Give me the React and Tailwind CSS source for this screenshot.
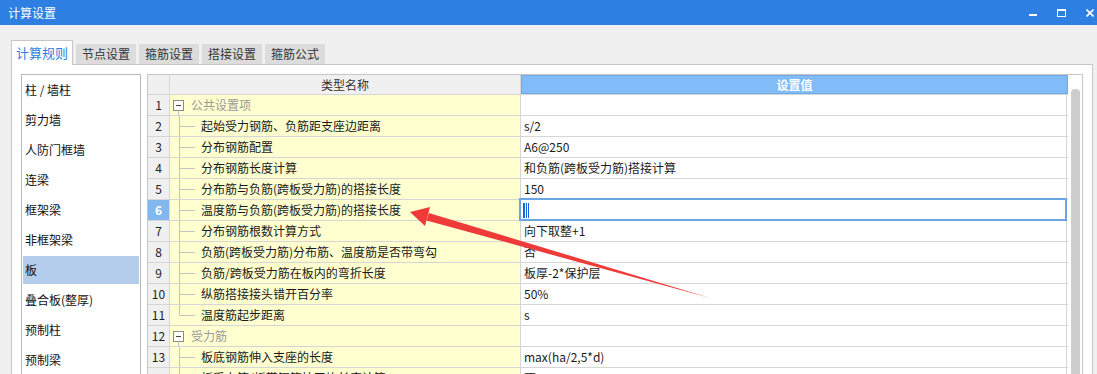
import React from 'react';

const tabs = ['计算规则', '节点设置', '箍筋设置', '搭接设置', '箍筋公式'];

const sideItems = ['柱 / 墙柱', '剪力墙', '人防门框墙', '连梁', '框架梁', '非框架梁', '板', '叠合板(整厚)', '预制柱', '预制梁'];

// type: g = group, c = child, l = last child
const rows = [
  { type: 'g', name: '公共设置项', value: '' },
  { type: 'c', name: '起始受力钢筋、负筋距支座边距离', value: 's/2' },
  { type: 'c', name: '分布钢筋配置', value: 'A6@250' },
  { type: 'c', name: '分布钢筋长度计算', value: '和负筋(跨板受力筋)搭接计算' },
  { type: 'c', name: '分布筋与负筋(跨板受力筋)的搭接长度', value: '150' },
  { type: 'c', name: '温度筋与负筋(跨板受力筋)的搭接长度', value: '', editing: true },
  { type: 'c', name: '分布钢筋根数计算方式', value: '向下取整+1' },
  { type: 'c', name: '负筋(跨板受力筋)分布筋、温度筋是否带弯勾', value: '否' },
  { type: 'c', name: '负筋/跨板受力筋在板内的弯折长度', value: '板厚-2*保护层' },
  { type: 'c', name: '纵筋搭接接头错开百分率', value: '50%' },
  { type: 'l', name: '温度筋起步距离', value: 's' },
  { type: 'g', name: '受力筋', value: '' },
  { type: 'c', name: '板底钢筋伸入支座的长度', value: 'max(ha/2,5*d)' },
  { type: 'c', name: '板受力筋/板带钢筋按平均长度计算', value: '否' },
];

const TreeMark = ({ type }) => {
  if (type === 'g') {
    return (
      <svg width="21" height="20" className="shrink-0">
        <rect x="3.5" y="5.5" width="10" height="10" fill="white" stroke="#8a8a8a" />
        <line x1="6" y1="10.5" x2="11" y2="10.5" stroke="#444" />
        <line x1="8.5" y1="15.5" x2="8.5" y2="20" stroke="#c4c4c4" />
      </svg>
    );
  }
  return (
    <svg width="31" height="20" className="shrink-0">
      <line x1="9.5" y1="0" x2="9.5" y2={type === 'l' ? 10.5 : 20} stroke="#c4c4c4" />
      <line x1="9.5" y1="10.5" x2="25" y2="10.5" stroke="#c4c4c4" />
    </svg>
  );
};

const Row = ({ row, index }) => (
  <div className="flex h-[21px] border-b border-[#d6d6d6]">
    <div
      className={`w-[22px] shrink-0 border-r border-[#d6d6d6] flex items-center justify-center text-[12px] ${
        row.editing ? 'bg-[#82b8ee] text-white font-bold' : 'bg-[#f0f0f0] text-[#222]'
      }`}
    >
      {index + 1}
    </div>
    <div className="w-[351px] shrink-0 border-r border-[#d6d6d6] bg-[#ffffcf] flex items-center">
      <TreeMark type={row.type} />
      <span className={`text-[12px] whitespace-nowrap ${row.type === 'g' ? 'text-[#9a9a9a]' : 'text-[#1a1a1a]'}`}>
        {row.name}
      </span>
    </div>
    <div className="relative w-[546px] shrink-0 border-r border-[#d6d6d6] bg-white flex items-center pl-[3px] text-[12px] text-[#1a1a1a] whitespace-nowrap">
      {row.editing ? (
        <>
          <div className="absolute -top-[2px] -left-[2px] -right-[1px] -bottom-[1px] border-2 border-[#6aa6e4]" />
          <div className="flex gap-[1px] h-[15px] w-[6px] bg-[#1466d4] px-[1.5px] ml-[-1px]">
            <div className="w-[1px] h-full bg-white" />
            <div className="w-[1px] h-full bg-white" />
          </div>
        </>
      ) : (
        row.value
      )}
    </div>
  </div>
);

const App = () => {
  return (
    <div
      className="relative w-[1097px] h-[374px] overflow-hidden bg-[#f0f0f0] select-none"
      style={{ fontFamily: '"Noto Sans CJK SC", "Microsoft YaHei", sans-serif' }}
    >
      {/* Title bar */}
      <div className="h-[25px] bg-[#2d7fe1] flex items-center justify-between pl-[8px] pr-[3px]">
        <span className="text-white text-[12px] leading-none">计算设置</span>
        <div className="flex items-center gap-[20px]">
          <div className="w-[8px] h-[2px] bg-white mt-[5px]" />
          <div className="w-[9px] h-[8px] border border-white border-t-2" />
          <svg width="8" height="8" viewBox="0 0 8 8">
            <path d="M0.5 0.5 L7.5 7.5 M7.5 0.5 L0.5 7.5" stroke="white" strokeWidth="1.6" />
          </svg>
        </div>
      </div>

      {/* Tabs */}
      <div className="h-[39px] flex items-end gap-[3px] pl-[11px]">
        {tabs.map((t, i) =>
          i === 0 ? (
            <div
              key={t}
              className="relative z-10 w-[62px] h-[25px] -mb-px bg-white border border-b-0 border-[#c6c6c6] flex items-center justify-center text-[13px] text-[#2d7fe1]"
            >
              {t}
            </div>
          ) : (
            <div
              key={t}
              className="w-[60px] h-[20px] bg-[#dcdcdc] flex items-center justify-center text-[12px] text-[#333]"
            >
              {t}
            </div>
          )
        )}
      </div>

      {/* Content panel */}
      <div className="ml-[11px] w-[1082px] h-[320px] border border-[#c6c6c6] bg-white flex gap-[6px] pt-[9px] pl-[9px]">
        {/* Side list */}
        <div className="w-[120px] shrink-0 border border-[#b8b8b8] bg-white">
          {sideItems.map((s) => (
            <div key={s} className="h-[30px] p-px">
              <div
                className={`h-full flex items-center pl-[2px] text-[12px] text-[#111] ${
                  s === '板' ? 'bg-[#b5cdec]' : ''
                }`}
              >
                {s}
              </div>
            </div>
          ))}
        </div>

        {/* Table */}
        <div className="w-[936px] shrink-0 border border-[#c6c6c6] flex">
          <div className="w-[920px] shrink-0">
            <div className="flex h-[20px] border-b border-[#d6d6d6]">
              <div className="w-[22px] shrink-0 border-r border-[#d6d6d6] bg-[#f0f0f0]" />
              <div className="w-[351px] shrink-0 border-r border-[#d6d6d6] bg-[#f0f0f0] flex items-center justify-center text-[12px] text-[#333]">
                类型名称
              </div>
              <div className="w-[547px] shrink-0 border border-[#6ea9e8] bg-[#82bcf8] flex items-center justify-center text-[12px] text-white font-bold">
                设置值
              </div>
            </div>
            {rows.map((r, i) => (
              <Row key={i} row={r} index={i} />
            ))}
          </div>
          {/* Scrollbar */}
          <div className="flex-1 bg-white pt-[14px] pl-[3px]">
            <div className="w-[9px] h-[400px] bg-[#cdcdcd] rounded-t-[4px]" />
          </div>
        </div>
      </div>

      {/* Red annotation arrow */}
      <svg className="absolute top-0 left-0 pointer-events-none" width="1097" height="374">
        <polygon points="410,212 430,207 425,226" fill="#ef3a3a" />
        <polygon points="426.5,220.5 428.8,213 710,298" fill="#ef3a3a" />
      </svg>
    </div>
  );
};

export default App;
